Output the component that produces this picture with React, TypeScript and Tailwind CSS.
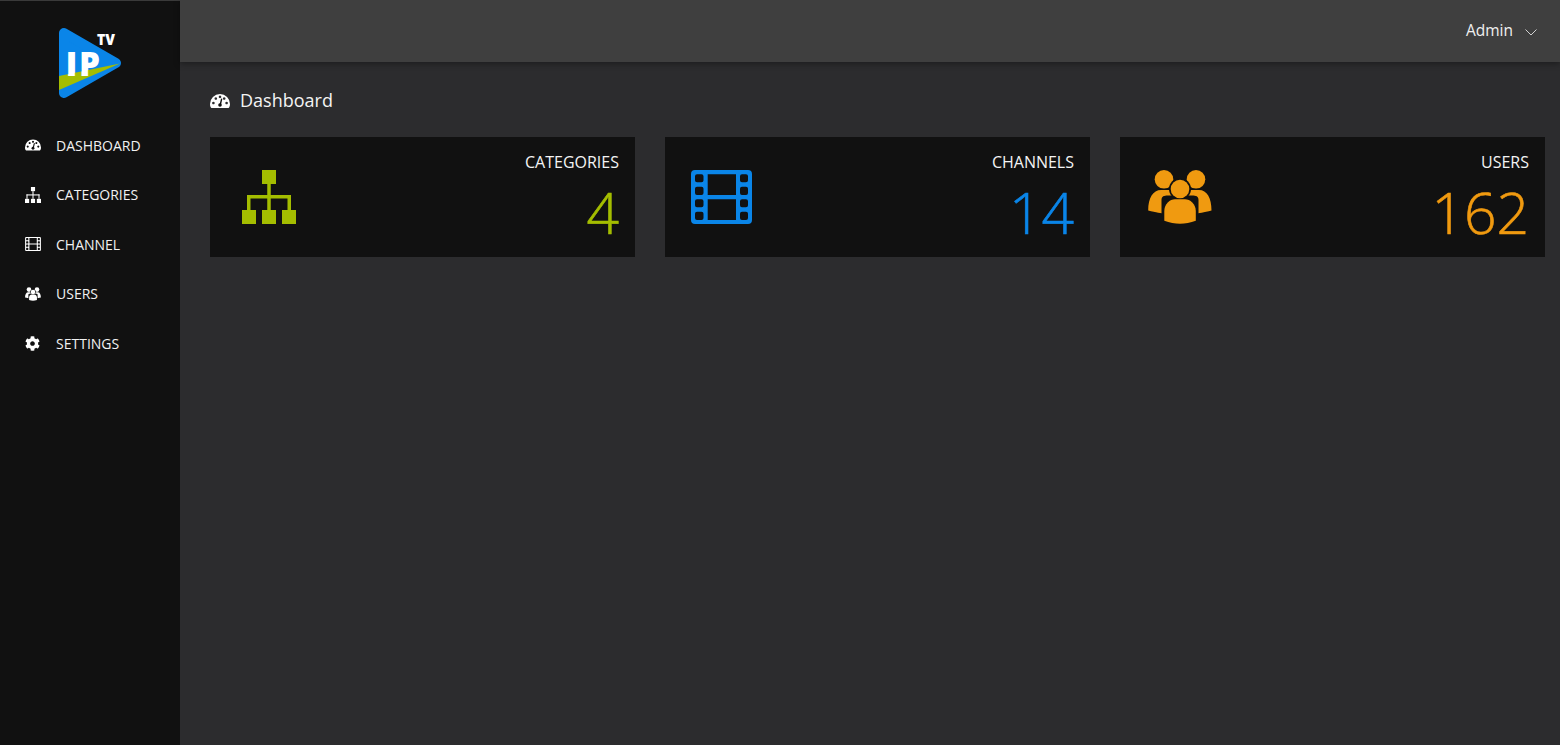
import React from "react";
import { FaCog } from "react-icons/fa";

const Logo = () => (
  <svg width="64" height="72" viewBox="58 26 64 72" className="block">
    <path d="M64 32 L116 62 L64 92 Z" fill="#0a85e8" stroke="#0a85e8" strokeWidth="10" strokeLinejoin="round" />
    <path d="M120 62.5 L59 75 L59 89 Z" fill="#a4bd00" />
    <text x="65.5" y="75" fill="#fff" fontSize="34" fontWeight="800" textLength="12" lengthAdjust="spacingAndGlyphs" fontFamily="'Open Sans', sans-serif">I</text>
    <text x="79" y="75" fill="#fff" fontSize="34" fontWeight="800" textLength="21" lengthAdjust="spacingAndGlyphs" fontFamily="'Open Sans', sans-serif">P</text>
    <text x="97" y="44" fill="#fff" fontSize="16.5" fontWeight="800" textLength="18" lengthAdjust="spacingAndGlyphs" fontFamily="'Open Sans', sans-serif">TV</text>
  </svg>
);

const GaugeIcon = ({ className }: { className?: string }) => (
  <svg viewBox="0 0 20 14" className={className}>
    <path
      fill="currentColor"
      fillRule="evenodd"
      d="M10 0A10 10 0 0 1 20 10C20 11.6 19.6 13 18.6 14H1.4C0.4 13 0 11.6 0 10A10 10 0 0 1 10 0Z
         M3.4 7.7a1.3 1.3 0 1 0 0.01 0Z
         M5.8 3.2a1.3 1.3 0 1 0 0.01 0Z
         M10 1.6a1.3 1.3 0 1 0 0.01 0Z
         M14.2 3.2a1.3 1.3 0 1 0 0.01 0Z
         M16.6 7.7a1.3 1.3 0 1 0 0.01 0Z"
    />
    <path d="M10.2 11L11.6 5.2" stroke="#111" strokeWidth="1.4" strokeLinecap="round" />
    <circle cx="10" cy="11" r="1.8" fill="#111" />
  </svg>
);

const SitemapIcon = ({ className }: { className?: string }) => (
  <svg viewBox="0 0 54 54" fill="currentColor" className={className}>
    <rect x="20" y="0" width="14" height="14" />
    <rect x="0" y="40" width="14" height="14" />
    <rect x="20" y="40" width="14" height="14" />
    <rect x="40" y="40" width="14" height="14" />
    <rect x="25.25" y="14" width="3.5" height="26" />
    <rect x="5" y="25" width="44" height="3.5" />
    <rect x="5" y="25" width="3.5" height="15" />
    <rect x="45.5" y="25" width="3.5" height="15" />
  </svg>
);

const FilmIcon = ({ className }: { className?: string }) => (
  <svg viewBox="0 0 61 54" className={className}>
    <path
      fill="currentColor"
      fillRule="evenodd"
      d="M4 0H57A4 4 0 0 1 61 4V50A4 4 0 0 1 57 54H4A4 4 0 0 1 0 50V4A4 4 0 0 1 4 0Z
         M6 4.3H10.5A2 2 0 0 1 12.5 6.3V10.3A2 2 0 0 1 10.5 12.3H6A2 2 0 0 1 4 10.3V6.3A2 2 0 0 1 6 4.3Z
         M6 16.7H10.5A2 2 0 0 1 12.5 18.7V23A2 2 0 0 1 10.5 25H6A2 2 0 0 1 4 23V18.7A2 2 0 0 1 6 16.7Z
         M6 29.3H10.5A2 2 0 0 1 12.5 31.3V35.3A2 2 0 0 1 10.5 37.3H6A2 2 0 0 1 4 35.3V31.3A2 2 0 0 1 6 29.3Z
         M6 41.7H10.5A2 2 0 0 1 12.5 43.7V48A2 2 0 0 1 10.5 50H6A2 2 0 0 1 4 48V43.7A2 2 0 0 1 6 41.7Z
         M51 4.3H55A2 2 0 0 1 57 6.3V10.3A2 2 0 0 1 55 12.3H51A2 2 0 0 1 49 10.3V6.3A2 2 0 0 1 51 4.3Z
         M51 16.7H55A2 2 0 0 1 57 18.7V23A2 2 0 0 1 55 25H51A2 2 0 0 1 49 23V18.7A2 2 0 0 1 51 16.7Z
         M51 29.3H55A2 2 0 0 1 57 31.3V35.3A2 2 0 0 1 55 37.3H51A2 2 0 0 1 49 35.3V31.3A2 2 0 0 1 51 29.3Z
         M51 41.7H55A2 2 0 0 1 57 43.7V48A2 2 0 0 1 55 50H51A2 2 0 0 1 49 48V43.7A2 2 0 0 1 51 41.7Z
         M16.7 4.3H45V25H16.7Z
         M16.7 29.3H45V50H16.7Z"
    />
  </svg>
);

const UsersIcon = ({ className }: { className?: string }) => (
  <svg viewBox="0 0 64 54" fill="currentColor" className={className}>
    <circle cx="16" cy="9.3" r="9.3" />
    <circle cx="48" cy="9.3" r="9.3" />
    <path d="M0.2 40.5C0.2 28 5 20 13 20H21C26 20 30 24 30 30H34C34 24 38 20 43 20H51C59 20 63.5 28 63.5 40.5C56 42.5 50 43.5 48 43.5H16C14 43.5 8 42.5 0.2 40.5Z" />
    <path d="M13.5 30C13.5 23.5 21 26 32 26C43 26 50.5 23.5 50.5 30V47H13.5Z" fill="#111" />
    <circle cx="32" cy="19" r="11" fill="#111" />
    <circle cx="32" cy="19" r="9.3" />
    <path d="M16.3 50.8V41C16.3 34 22 29.3 27 29.3H37C42 29.3 47.8 34 47.8 41V50.8C37 54.8 27 54.8 16.3 50.8Z" />
  </svg>
);

const menu = [
  { label: "DASHBOARD", icon: <GaugeIcon className="w-4 h-3" /> },
  { label: "CATEGORIES", icon: <SitemapIcon className="w-4 h-4" /> },
  { label: "CHANNEL", icon: <FilmIcon className="w-4 h-[14px]" /> },
  { label: "USERS", icon: <UsersIcon className="w-4 h-[14px]" /> },
  { label: "SETTINGS", icon: <FaCog className="w-[15px] h-[15px]" /> },
];

const cards = [
  { title: "CATEGORIES", value: "4", color: "text-[#a4bd00]", icon: <SitemapIcon className="w-[54px] h-[54px] ml-[32px]" /> },
  { title: "CHANNELS", value: "14", color: "text-[#0a85e8]", icon: <FilmIcon className="w-[61px] h-[54px] ml-[26px]" /> },
  { title: "USERS", value: "162", color: "text-[#f09a10]", icon: <UsersIcon className="w-[64px] h-[54px] ml-[28px]" /> },
];

export default function App() {
  return (
    <div className="flex h-screen overflow-hidden bg-[#2c2c2e] text-white font-['Open_Sans',sans-serif]">
      <aside className="w-[180px] shrink-0 bg-[#111111] border-t border-[#3a3a3a]">
        <div className="flex justify-center pt-[26px] h-[119.6px]">
          <Logo />
        </div>
        <nav className="flex flex-col">
          {menu.map((item) => (
            <div key={item.label} className="flex items-center h-[49.5px] pl-[25px] text-[14px] text-[#f2f2f2]">
              <span className="w-[31px] flex items-center text-white">{item.icon}</span>
              <span>{item.label}</span>
            </div>
          ))}
        </nav>
      </aside>
      <main className="flex-1 flex flex-col min-w-0">
        <header className="h-[62px] shrink-0 flex items-center justify-end pr-[23px] bg-[#3f3f3f] shadow-[0_2px_6px_rgba(0,0,0,0.35)]">
          <span className="text-[15.5px] text-[#f0f0f0]">Admin</span>
          <svg width="12" height="7" viewBox="0 0 12 7" fill="none" stroke="#d0d0d0" className="ml-[12px] mt-[2px]">
            <path d="M0.5 0.5L6 6L11.5 0.5" />
          </svg>
        </header>
        <div className="pl-[30px] pr-[15px]">
          <div className="flex items-center h-[75px] pt-[2px] text-[18px] text-[#f4f4f4]">
            <GaugeIcon className="w-[20px] h-[14px] mr-[10px] text-white" />
            <span>Dashboard</span>
          </div>
          <div className="grid grid-cols-3 gap-[30px]">
            {cards.map((card) => (
              <div key={card.title} className="h-[120px] bg-[#111111] flex justify-between">
                <div className={`pt-[33px] ${card.color}`}>{card.icon}</div>
                <div className="pr-[16px] pt-[14px] text-right">
                  <div className="text-[16px] leading-[22px] text-[#f4f4f4]">{card.title}</div>
                  <div className={`mt-[11px] text-[57px] leading-[57px] font-light [-webkit-text-stroke:0.6px_currentColor] ${card.color}`}>{card.value}</div>
                </div>
              </div>
            ))}
          </div>
        </div>
      </main>
    </div>
  );
}
